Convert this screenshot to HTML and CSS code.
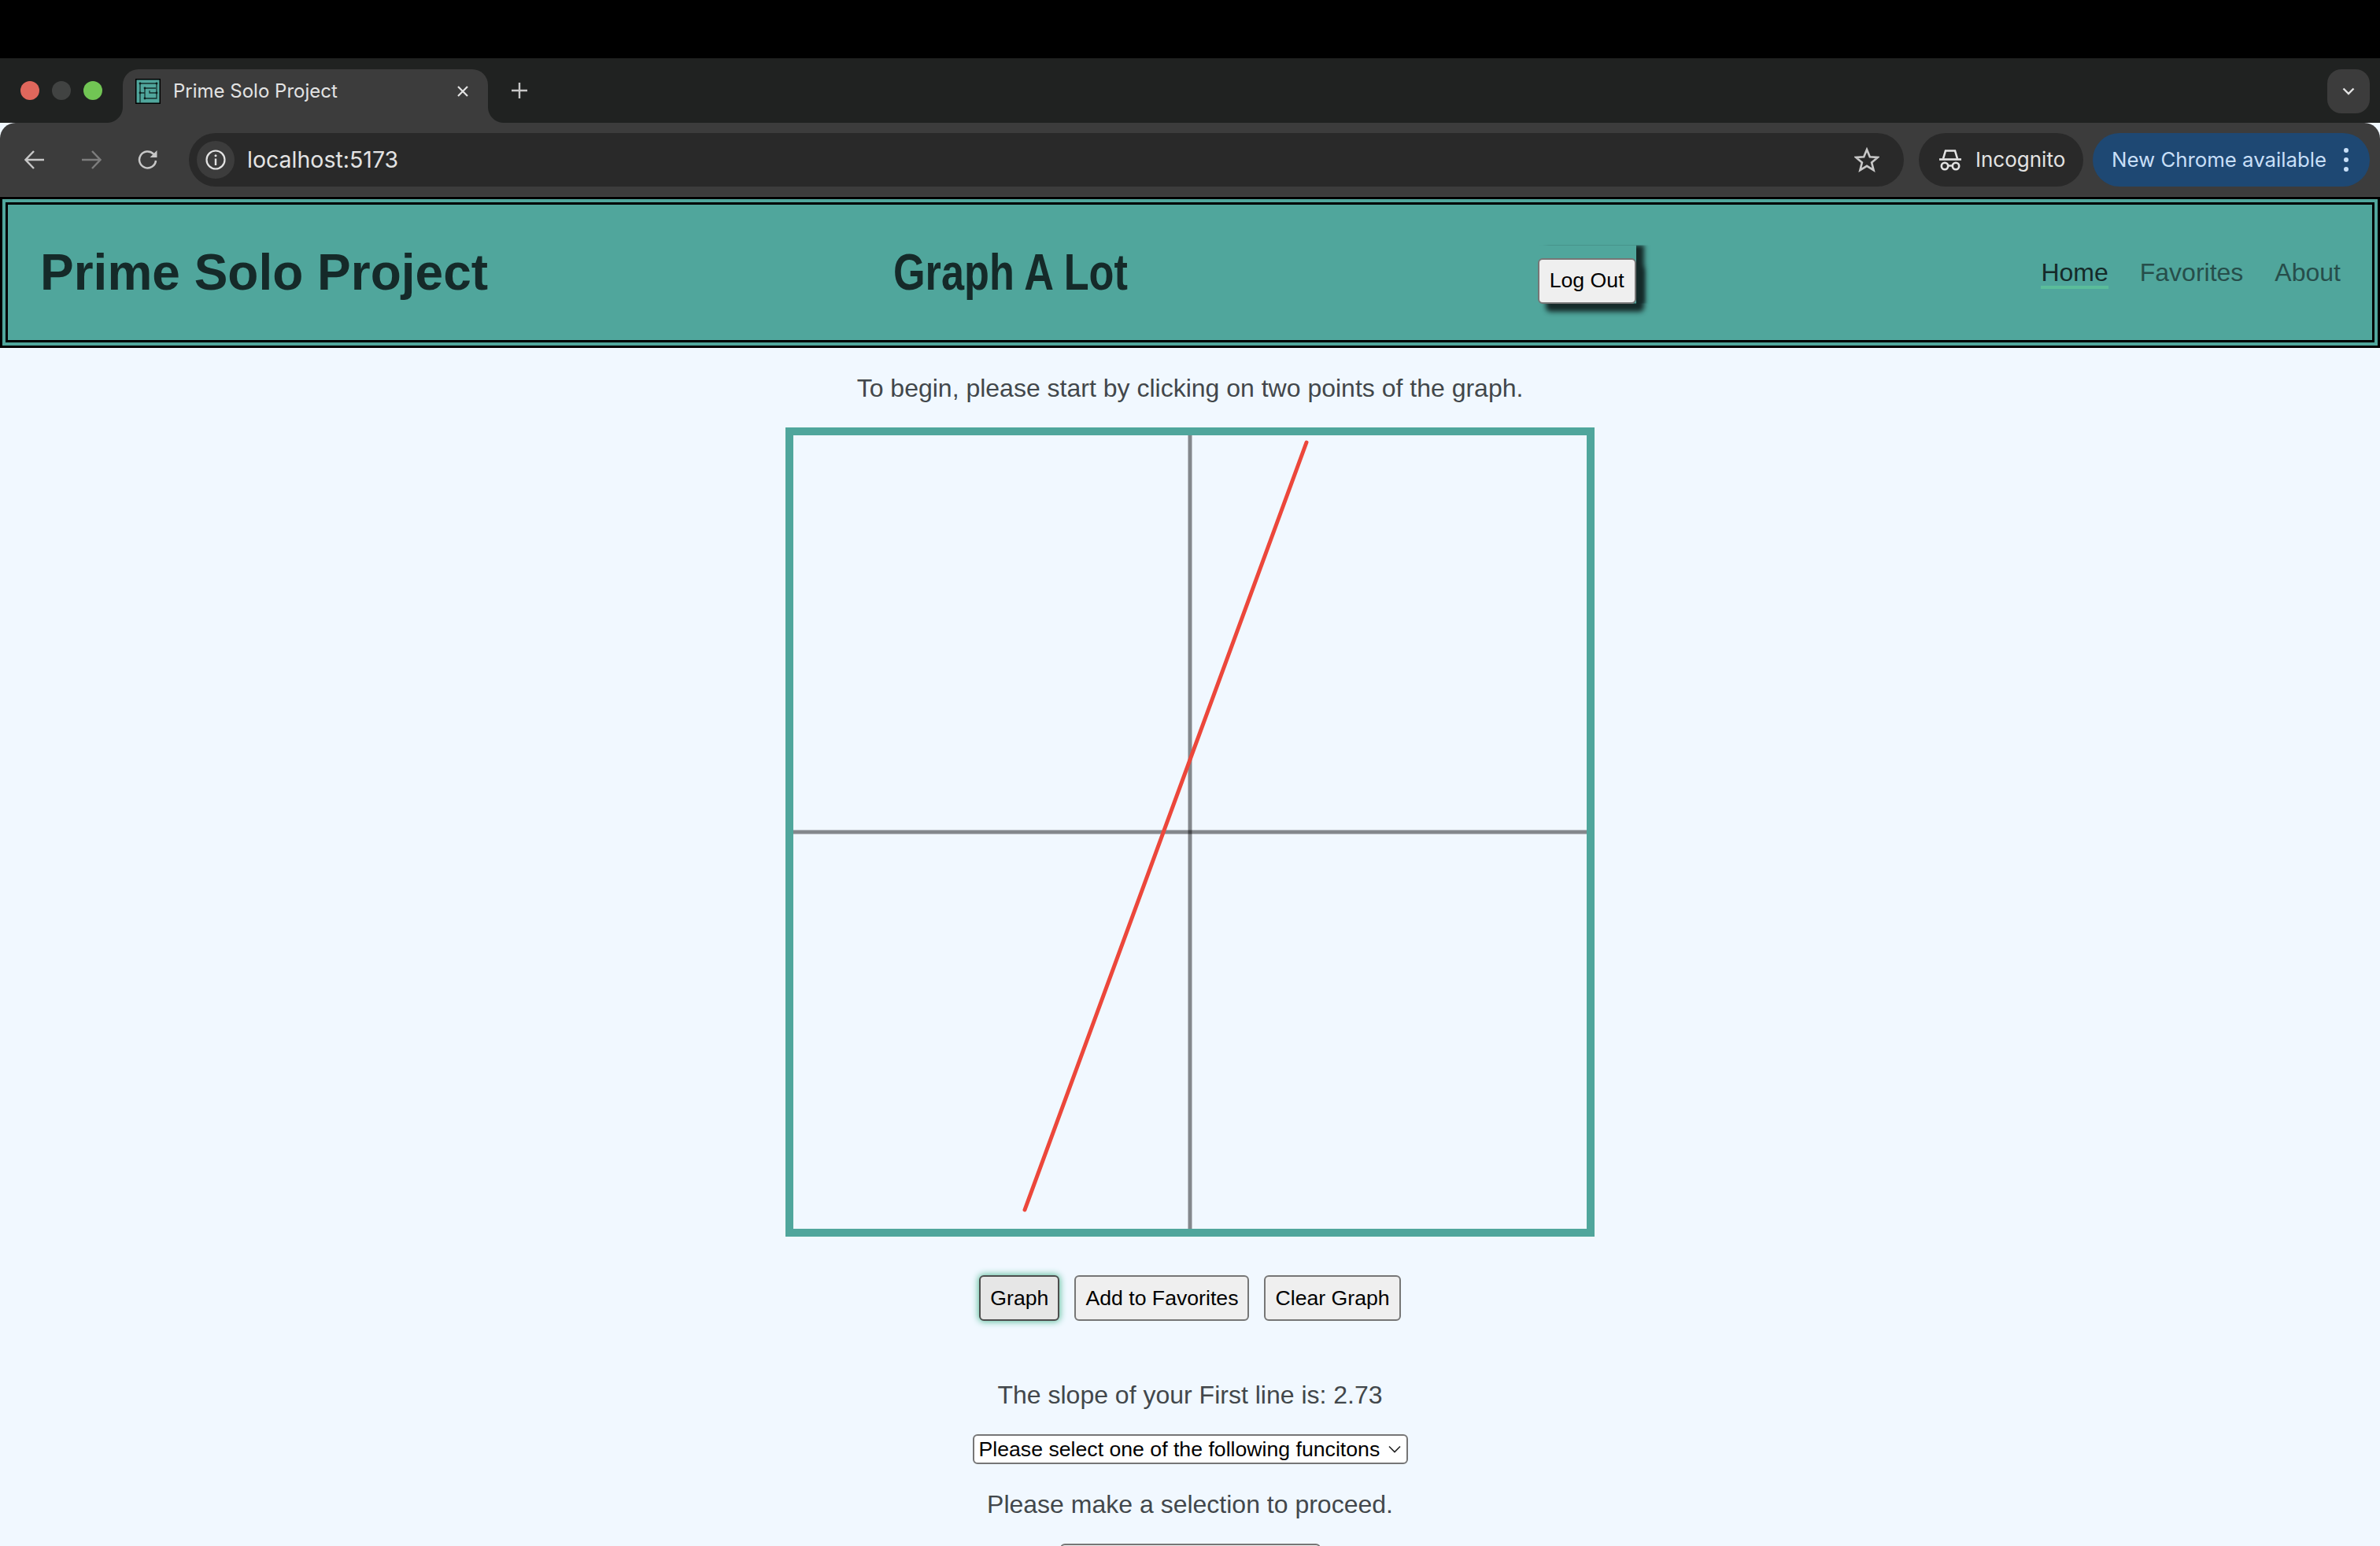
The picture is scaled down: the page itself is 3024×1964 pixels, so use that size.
FILE: index.html
```html
<!DOCTYPE html>
<html lang="en">
<head>
<meta charset="utf-8">
<title>Prime Solo Project</title>
<link rel="stylesheet" href="styles.css">
</head>
<body>
<div class="os-bar"></div>
<div class="tabstrip">
  <div class="lights"><i class="light red"></i><i class="light grey"></i><i class="light green"></i></div>
  <div class="tab">
    <svg class="favicon" viewBox="0 0 32 32"><rect x="0.75" y="0.75" width="30.5" height="30.5" fill="#50a69c" stroke="#000" stroke-width="1.5"/><path d="M6 31V6h21v19H12V12h14M12 18h-6M27 18h-9v-3" fill="none" stroke="#14302d" stroke-width="1.3"/><g fill="#0c1f1d"><circle cx="6" cy="6" r="1.4"/><circle cx="27" cy="6" r="1.4"/><circle cx="12" cy="12" r="1.4"/><circle cx="6" cy="18" r="1.4"/><circle cx="27" cy="18" r="1.4"/><circle cx="12" cy="25" r="1.4"/></g></svg>
    <span class="tab-title">Prime Solo Project</span>
    <svg class="tab-close" viewBox="0 0 16 16"><path d="M2 2l12 12M14 2L2 14" stroke="#e3e3e3" stroke-width="2.2" fill="none"/></svg>
  </div>
  <svg class="new-tab" viewBox="0 0 20 20"><path d="M10 0v20M0 10h20" stroke="#c7c7c7" stroke-width="2.4" fill="none"/></svg>
  <div class="tab-search"><svg viewBox="0 0 16 10" class="chev"><path d="M1.5 1.5L8 8l6.500-6.500" stroke="#e3e3e3" stroke-width="2.400" fill="none"/></svg></div>
</div>
<div class="toolbar">
  <svg class="tool-icon" viewBox="0 0 26 26"><path d="M25 13H2M12 2L1.500 13 12 24" stroke="#c7c7c7" stroke-width="2.500" fill="none"/></svg>
  <svg class="tool-icon" viewBox="0 0 26 26"><path d="M1 13h23M14 2l10.500 11L14 24" stroke="#7d7d7d" stroke-width="2.500" fill="none"/></svg>
  <svg class="tool-icon" viewBox="0 0 26 26"><path d="M23 14a10.500 10.500 0 1 1-3-8.500L23 8" stroke="#c7c7c7" stroke-width="2.500" fill="none"/><path d="M24.500 1v9h-9z" fill="#c7c7c7"/></svg>
  <div class="omnibox">
    <div class="info"><svg viewBox="0 0 26 26"><circle cx="13" cy="13" r="11.500" stroke="#e3e3e3" stroke-width="2.200" fill="none"/><path d="M13 11.500V20" stroke="#e3e3e3" stroke-width="2.400"/><circle cx="13" cy="7.800" r="1.500" fill="#e3e3e3"/></svg></div>
    <span class="url">localhost:5173</span>
    <svg class="star" viewBox="0 0 32 32"><path d="M16 3l3.800 9.300 10 .7-7.700 6.400 2.500 9.700L16 23.800l-8.600 5.300 2.500-9.700L2.200 13l10-.7z" fill="none" stroke="#c7c7c7" stroke-width="2.600"/></svg>
  </div>
  <div class="incognito">
    <svg class="spy" viewBox="0 0 30 28"><path d="M1 13.500h28" stroke="#e3e3e3" stroke-width="2.600"/><path d="M6 12.500L9 2.500h12l3 10" stroke="#e3e3e3" stroke-width="2.600" fill="none"/><circle cx="8" cy="22" r="4.200" stroke="#e3e3e3" stroke-width="2.600" fill="none"/><circle cx="22" cy="22" r="4.200" stroke="#e3e3e3" stroke-width="2.600" fill="none"/><path d="M12 21.500h6" stroke="#e3e3e3" stroke-width="2.400"/></svg>
    <span>Incognito</span>
  </div>
  <div class="update">
    <span>New Chrome available</span>
    <div class="dots"><i></i><i></i><i></i></div>
  </div>
</div>
<header class="site-header">
  <h1 class="brand">Prime Solo Project</h1>
  <h2 class="app-name"><span class="app-name-text">Graph A Lot</span></h2>
  <div class="logout-wrap"><button class="btn logout">Log Out</button></div>
  <nav class="nav">
    <a class="nav-link active">Home</a>
    <a class="nav-link">Favorites</a>
    <a class="nav-link">About</a>
  </nav>
</header>
<main class="main">
  <p class="copy intro">To begin, please start by clicking on two points of the graph.</p>
  <div class="graph">
    <svg viewBox="0 0 1008 1008" class="plot">
      <line x1="504" y1="0" x2="504" y2="1008" class="axis"/>
      <line x1="0" y1="504" x2="1008" y2="504" class="axis"/>
      <line x1="652" y1="9" x2="294" y2="984" class="trace"/>
    </svg>
  </div>
  <div class="actions">
    <button class="btn pressed">Graph</button>
    <button class="btn">Add to Favorites</button>
    <button class="btn">Clear Graph</button>
  </div>
  <p class="copy slope">The slope of your First line is: 2.73</p>
  <div class="select-wrap">
    <select class="fn-select"><option>Please select one of the following funcitons</option></select>
    <svg class="select-chev" viewBox="0 0 16 10"><path d="M1 1.500l7 7 7-7" stroke="#222" stroke-width="1.600" fill="none"/></svg>
  </div>
  <p class="copy proceed">Please make a selection to proceed.</p>
  <button class="btn submit" aria-label="Submit"></button>
</main>
</body>
</html>
```
FILE: styles.css
```css
* { box-sizing: border-box; }
html, body { margin: 0; height: 1964px; overflow: hidden; }
body { background: #f1f8ff; font-family: "Liberation Sans", Arial, sans-serif; color: #42474b; }

.os-bar { height: 74px; background: #000; }

.tabstrip { height: 82px; background: #202221; display: flex; align-items: flex-start; padding-top: 14px; padding-right: 13px; }
.lights { display: flex; gap: 16px; padding: 15px 0 0 26px; width: 156px; }
.light { width: 24px; height: 24px; border-radius: 50%; display: block; }
.red { background: #e0675c; }
.grey { background: #414342; }
.green { background: #71c554; }

.tab { position: relative; width: 464px; height: 68px; background: #3c3c3c; border-radius: 20px 20px 0 0; display: flex; align-items: flex-start; padding: 12px 24px 0 16px; }
.tab::before, .tab::after { content: ""; position: absolute; bottom: 0; width: 20px; height: 20px; }
.tab::before { left: -20px; background: radial-gradient(circle at 0 0, #202221 19.500px, #3c3c3c 20.500px); }
.tab::after { right: -20px; background: radial-gradient(circle at 100% 0, #202221 19.500px, #3c3c3c 20.500px); }
.favicon { width: 32px; height: 32px; flex: none; }
.tab-title { margin-left: 16px; font: 400 24px/32px Inter, sans-serif; color: #e3e3e3; flex: 1; white-space: nowrap; }
.tab-close { width: 16px; height: 16px; margin-top: 8px; flex: none; }
.new-tab { width: 20px; height: 20px; margin: 17px 0 0 30px; flex: none; }
.tab-search { margin-left: auto; width: 54px; height: 56px; border-radius: 18px; background: #3c3c3c; display: flex; align-items: center; justify-content: center; }
.chev { width: 16px; height: 10px; }

.toolbar { height: 94px; background: #3c3c3c; border-bottom: 1px solid #4a4a4a; border-radius: 20px 20px 0 0; display: flex; align-items: center; padding: 0 13px 0 31px; }
.tool-icon { width: 26px; height: 26px; flex: none; margin-right: 46px; }
.tool-icon:nth-of-type(3) { margin-right: 0; }
.omnibox { margin-left: 39px; width: 2179px; height: 68px; border-radius: 34px; background: #292929; display: flex; align-items: center; padding: 0 31px 0 10px; }
.info { width: 48px; height: 48px; border-radius: 50%; background: #3c3c3c; display: flex; align-items: center; justify-content: center; flex: none; }
.info svg { width: 26px; height: 26px; }
.url { margin-left: 16px; font: 400 28.500px/32px Inter, sans-serif; color: #e3e3e3; flex: 1; }
.star { width: 32px; height: 32px; flex: none; }
.incognito { margin-left: 19px; width: 209px; height: 68px; border-radius: 34px; background: #292929; display: flex; align-items: center; padding-left: 25px; gap: 17px; font: 400 26px/32px Inter, sans-serif; color: #e3e3e3; }
.spy { width: 30px; height: 28px; flex: none; }
.update { margin-left: 12px; width: 352px; height: 68px; border-radius: 34px; background: #1e4873; display: flex; align-items: center; padding-left: 24px; font: 400 25.800px/32px Inter, sans-serif; color: #c8dff7; white-space: nowrap; }
.dots { display: flex; flex-direction: column; gap: 6px; margin-left: auto; margin-right: 27px; }
.dots i { display: block; width: 6px; height: 6px; border-radius: 50%; background: #c8dff7; }

.site-header { height: 192px; border: 10px double #000; background: #50a69c; display: flex; align-items: center; justify-content: space-between; padding: 0 40px 0 41px; color: #152a29; }
.brand { margin: 0; font-size: 64px; line-height: 76px; font-weight: 700; white-space: nowrap; }
.app-name { margin: 0; width: 304px; font-size: 64px; line-height: 76px; font-weight: 700; white-space: nowrap; }
.app-name-text { display: inline-block; transform: scaleX(.816); transform-origin: left center; }

.logout-wrap { position: relative; margin-top: 21px; box-shadow: 10px 10px 6px #152a29; border-radius: 6px; }
.logout-wrap::before { content: ""; position: absolute; left: 0; right: 0; top: -17px; bottom: 0; background: #50a69c; box-shadow: 10px 0 6px #152a29; clip-path: inset(1px -20px 0 0); }
.btn.logout { position: relative; display: block; padding: 0 13px; }

.nav { display: flex; gap: 40px; }
.nav-link { position: relative; font-size: 32px; line-height: 36px; color: #152a29; opacity: .7; }
.nav-link.active { opacity: 1; }
.nav-link.active::after { content: ""; position: absolute; left: 0; right: 0; bottom: -3px; height: 4px; background: #5bbd9a; }

.main { display: flex; flex-direction: column; align-items: center; }
.copy { margin: 0; font-size: 32px; line-height: 36px; text-align: center; white-space: nowrap; }
.intro { margin-top: 33px; }
.graph { margin-top: 32px; width: 1028px; height: 1028px; border: 10px solid #50a69c; }
.plot { display: block; width: 1008px; height: 1008px; }
.axis { stroke: #000; stroke-opacity: .45; stroke-width: 5; }
.trace { stroke: #ec473b; stroke-width: 5; stroke-linecap: round; }

.actions { margin-top: 49px; display: flex; gap: 19px; }
.btn { height: 58px; padding: 0 12px; border: 2.670px solid #767676; border-radius: 6px; background: #efefef; font: 400 26.670px "Liberation Sans", Arial, sans-serif; color: #000; white-space: nowrap; }
.pressed { background: #e6e6e6; border-color: #4d4d4d; box-shadow: 0 0 8px 1px #5bbd9a; }

.slope { margin-top: 76px; }
.select-wrap { position: relative; margin-top: 32px; }
.fn-select { display: block; appearance: none; width: 553px; height: 38px; padding: 0 0 0 6px; border: 2.670px solid #767676; border-radius: 6px; background: #fff; font: 400 26.670px "Liberation Sans", Arial, sans-serif; color: #000; }
.select-chev { position: absolute; right: 9px; top: 14px; width: 16px; height: 10px; pointer-events: none; }
.proceed { margin-top: 33px; }
.submit { margin-top: 32px; width: 331px; flex: none; }
```
